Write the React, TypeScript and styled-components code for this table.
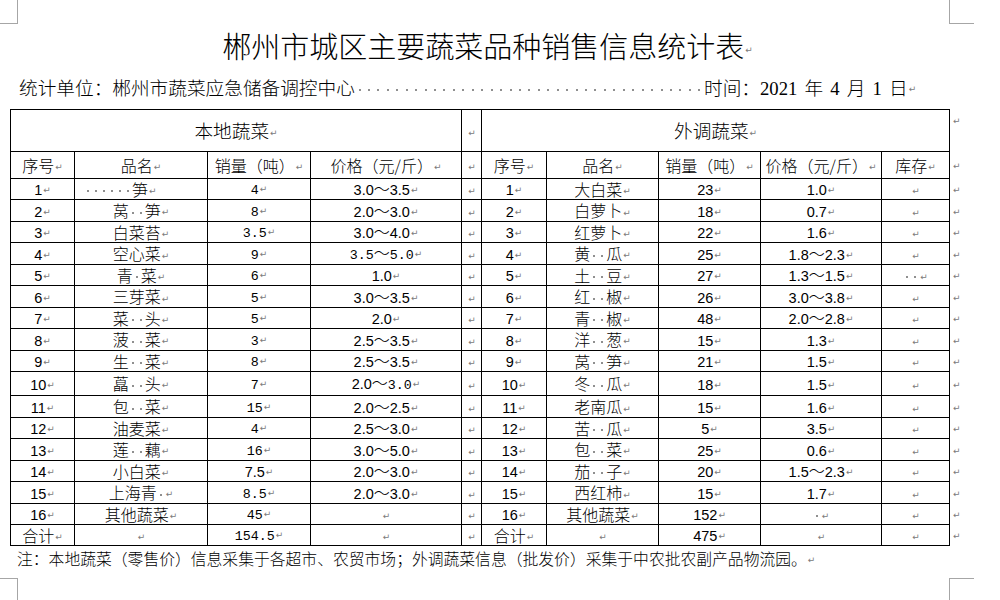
import React from 'react';
import styled, { createGlobalStyle } from 'styled-components';

const CJK = `"Noto Sans CJK SC", sans-serif`;

const GlobalStyle = createGlobalStyle`
  html, body {
    margin: 0;
    padding: 0;
    background: #fff;
  }
  body {
    font-family: ${CJK};
    color: #000;
  }
`;

const Page = styled.div`
  position: relative;
  width: 1000px;
  height: 600px;
  overflow: hidden;
  background: #fff;
`;

// page corner marks of the word processor
const Corner = styled.span<{ $pos: 'tl' | 'tr' | 'bl' | 'br' }>`
  position: absolute;
  box-sizing: border-box;
  border: 0 solid #a6a6a6;
  ${p => (p.$pos[0] === 't' ? 'top: 0; height: 24px; border-bottom-width: 1px;' : 'top: 578px; height: 22px; border-top-width: 1px;')}
  ${p => (p.$pos[1] === 'l' ? 'left: 0; width: 18px; border-right-width: 1px;' : 'left: 949px; width: 25px; border-left-width: 1px;')}
`;

const Title = styled.h1`
  margin: 31px 0 0;
  width: 975px;
  text-align: center;
  font-family: ${CJK};
  font-size: 29px;
  font-weight: 300;
  line-height: 29px;
  white-space: nowrap;
`;

const Meta = styled.div`
  margin-top: 17px;
  padding-left: 19px;
  font-size: 18.67px;
  font-weight: 300;
  line-height: 20px;
  white-space: nowrap;
`;

const Latin = styled.span`
  font-family: "Liberation Serif", serif;
  word-spacing: 2.5px;
  white-space: pre;
`;

const SpaceMark = styled.span<{ $w?: number }>`
  display: inline-block;
  width: ${p => p.$w ?? 8}px;
  height: 10px;
  vertical-align: middle;
  background: linear-gradient(#8f8f8f, #8f8f8f) center / 2px 2px no-repeat;
`;

const Mark = styled.span`
  display: inline-block;
  margin-left: 1px;
  font-family: "DejaVu Sans", sans-serif;
  font-size: 9px;
  font-weight: 400;
  line-height: 9px;
  color: #7a7a7a;
  vertical-align: middle;
`;

const Sheet = styled.table`
  margin: 10px 0 0 10px;
  border-collapse: collapse;
  table-layout: fixed;
  width: 953px;
  font-family: ${CJK};
  font-size: 16px;
`;

const Row = styled.tr<{ $h: number }>`
  height: ${p => p.$h}px;
`;

const Cell = styled.td<{ $align?: 'left' | 'center'; $big?: boolean }>`
  border: 1px solid #000;
  padding: ${p => (p.$align === 'left' ? '0 0 0 9px' : '0')};
  text-align: ${p => p.$align ?? 'center'};
  vertical-align: middle;
  font-size: ${p => (p.$big ? '18.67px' : '16px')};
  font-weight: 300;
  line-height: 14px;
  white-space: nowrap;
`;

const EndCell = styled.td<{ $top?: boolean }>`
  border: none;
  padding: ${p => (p.$top ? '4px 0 0 2px' : '0 0 0 2px')};
  vertical-align: ${p => (p.$top ? 'top' : 'middle')};
  line-height: 10px;
`;

const Num = styled.span<{ $mono?: boolean }>`
  font-family: ${p => (p.$mono ? '"Liberation Mono", monospace' : '"Liberation Sans", sans-serif')};
  font-size: ${p => (p.$mono ? '13.33px' : '14.5px')};
  font-weight: 400;
  line-height: 14px;
`;

const Note = styled.div`
  margin-top: 3px;
  padding-left: 17px;
  font-size: 15.8px;
  font-weight: 300;
  line-height: 20px;
  white-space: nowrap;
`;

const Return = () => <Mark>↵</Mark>;

// [..] = song-style monospace digits, {..} = sans digits
const Rich = ({ text, mono = false }: { text: string; mono?: boolean }) => {
  const parts = text.split(/(\[[^\]]*\]|\{[^}]*\})/).filter(Boolean);
  const out: React.ReactNode[] = [];
  parts.forEach((part, pi) => {
    let m = mono;
    let body = part;
    if (part.startsWith('[')) {
      m = true;
      body = part.slice(1, -1);
    } else if (part.startsWith('{')) {
      m = false;
      body = part.slice(1, -1);
    }
    const tokens = body.match(/·|[0-9.]+|[^·0-9.]+/g) || [];
    tokens.forEach((t, ti) => {
      const key = `${pi}-${ti}`;
      if (t === '·') out.push(<SpaceMark key={key} />);
      else if (/^[0-9.]+$/.test(t)) out.push(<Num key={key} $mono={m}>{t}</Num>);
      else out.push(<React.Fragment key={key}>{t}</React.Fragment>);
    });
  });
  return (
    <>
      {out}
      <Return />
    </>
  );
};

const localRows = [
  ['1', '······笋', '4', '3.0～3.5'],
  ['2', '莴··笋', '8', '2.0～3.0'],
  ['3', '白菜苔', '3.5', '3.0～4.0'],
  ['4', '空心菜', '9', '[3.5～5.0]'],
  ['5', '青·菜', '6', '1.0'],
  ['6', '三芽菜', '5', '3.0～3.5'],
  ['7', '菜··头', '5', '2.0'],
  ['8', '菠··菜', '3', '2.5～3.5'],
  ['9', '生··菜', '8', '2.5～3.5'],
  ['10', '藠··头', '7', '2.0～[3.0]'],
  ['11', '包··菜', '15', '2.0～2.5'],
  ['12', '油麦菜', '4', '2.5～3.0'],
  ['13', '莲··藕', '16', '3.0～5.0'],
  ['14', '小白菜', '{7.5}', '2.0～3.0'],
  ['15', '上海青·', '8.5', '2.0～3.0'],
  ['16', '其他蔬菜', '45', ''],
];

const outerRows = [
  ['1', '大白菜', '23', '1.0', ''],
  ['2', '白萝卜', '18', '0.7', ''],
  ['3', '红萝卜', '22', '1.6', ''],
  ['4', '黄··瓜', '25', '1.8～2.3', ''],
  ['5', '土··豆', '27', '1.3～1.5', '··'],
  ['6', '红··椒', '26', '3.0～3.8', ''],
  ['7', '青··椒', '48', '2.0～2.8', ''],
  ['8', '洋··葱', '15', '1.3', ''],
  ['9', '莴··笋', '21', '1.5', ''],
  ['10', '冬··瓜', '18', '1.5', ''],
  ['11', '老南瓜', '15', '1.6', ''],
  ['12', '苦··瓜', '5', '3.5', ''],
  ['13', '包··菜', '25', '0.6', ''],
  ['14', '茄··子', '20', '1.5～2.3', ''],
  ['15', '西红柿', '15', '1.7', ''],
  ['16', '其他蔬菜', '152', '·', ''],
];

const rowHeights = [21, 22, 21, 22, 21, 22, 21, 22, 21, 24, 22, 21, 22, 21, 22, 21];
const colWidths = [64, 133, 103, 151, 20, 65, 112, 102, 121, 68, 14];

const App: React.FC = () => {
  return (
    <Page>
      <GlobalStyle />
      <Corner $pos="tl" />
      <Corner $pos="tr" />
      <Corner $pos="bl" />
      <Corner $pos="br" />

      <Title>
        郴州市城区主要蔬菜品种销售信息统计表
        <Return />
      </Title>

      <Meta>
        统计单位：郴州市蔬菜应急储备调控中心
        {Array.from({ length: 37 }, (_, i) => (
          <SpaceMark key={i} $w={9.45} />
        ))}
        时间：<Latin>2021 </Latin>年<Latin> 4 </Latin>月<Latin> 1 </Latin>日
        <Return />
      </Meta>

      <Sheet>
        <colgroup>
          {colWidths.map((w, i) => (
            <col key={i} style={{ width: w }} />
          ))}
        </colgroup>
        <tbody>
          <Row $h={42}>
            <Cell colSpan={4} $big>
              本地蔬菜
              <Return />
            </Cell>
            <Cell>
              <Return />
            </Cell>
            <Cell colSpan={5} $big>
              外调蔬菜
              <Return />
            </Cell>
            <EndCell $top>
              <Return />
            </EndCell>
          </Row>
          <Row $h={27}>
            {['序号', '品名', '销量（吨）', '价格（元/斤）', '', '序号', '品名', '销量（吨）', '价格（元/斤）', '库存'].map(
              (h, i) => (
                <Cell key={i}>
                  {h}
                  <Return />
                </Cell>
              )
            )}
            <EndCell>
              <Return />
            </EndCell>
          </Row>
          {localRows.map((l, i) => {
            const r = outerRows[i];
            return (
              <Row key={i} $h={rowHeights[i]}>
                <Cell>
                  <Rich text={l[0]} />
                </Cell>
                <Cell $align={l[1].startsWith('·') ? 'left' : 'center'}>
                  <Rich text={l[1]} />
                </Cell>
                <Cell>
                  <Rich text={l[2]} mono />
                </Cell>
                <Cell>
                  <Rich text={l[3]} />
                </Cell>
                <Cell>
                  <Return />
                </Cell>
                {r.map((v, j) => (
                  <Cell key={j}>
                    <Rich text={v} />
                  </Cell>
                ))}
                <EndCell>
                  <Return />
                </EndCell>
              </Row>
            );
          })}
          <Row $h={21}>
            <Cell>
              合计
              <Return />
            </Cell>
            <Cell>
              <Return />
            </Cell>
            <Cell>
              <Rich text="154.5" mono />
            </Cell>
            <Cell>
              <Return />
            </Cell>
            <Cell>
              <Return />
            </Cell>
            <Cell>
              合计
              <Return />
            </Cell>
            <Cell>
              <Return />
            </Cell>
            <Cell>
              <Rich text="475" />
            </Cell>
            <Cell>
              <Return />
            </Cell>
            <Cell>
              <Return />
            </Cell>
            <EndCell>
              <Return />
            </EndCell>
          </Row>
        </tbody>
      </Sheet>

      <Note>
        注：本地蔬菜（零售价）信息采集于各超市、农贸市场；外调蔬菜信息（批发价）采集于中农批农副产品物流园。
        <Return />
      </Note>
    </Page>
  );
};

export default App;
